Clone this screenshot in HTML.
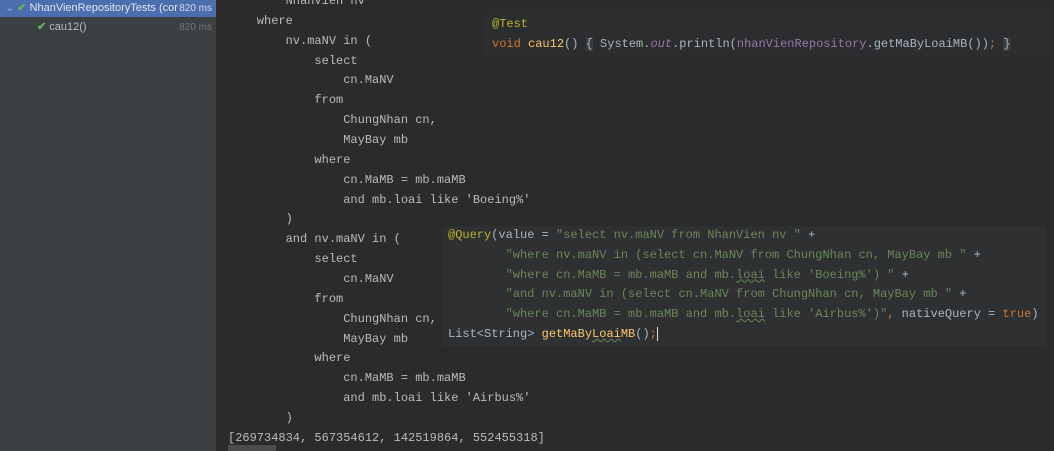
<!DOCTYPE html>
<html><head><style>
*{margin:0;padding:0;box-sizing:border-box}
body{width:1054px;height:451px;background:#2b2b2b;overflow:hidden;position:relative;font-family:"Liberation Sans",sans-serif}
#left{position:absolute;left:0;top:0;width:216px;height:451px;background:#3c3f41}
.row{position:absolute;left:0;width:216px;height:17px;font-size:11px;line-height:17px;color:#bbb}
.sel{background:#4b6eaf;color:#dfe6f0}
.ms{position:absolute;right:4px;font-size:10px;color:#777}
.sel .ms{color:#d0d8e8}
.chk{color:#5fb85f;font-weight:bold}
#con{position:absolute;left:228px;top:-8px;font-family:"Liberation Mono",monospace;font-size:12px;line-height:19.86px;color:#bbbbbb;white-space:pre}
.pop{position:absolute;font-family:"Liberation Mono",monospace;font-size:12px;white-space:pre;color:#a9b7c6}
.s{color:#6a8759}.k{color:#cc7832}.a{color:#bbb529}.m{color:#ffc66d}.i{color:#9876aa;font-style:italic}
.u{text-decoration:underline wavy #6a8759;text-decoration-thickness:1px}
</style></head><body>
<div id="left">
<div class="row sel" style="top:0"><span style="color:#9ab;margin-left:5px">⌄</span> <span class="chk">✔</span> NhanVienRepositoryTests (cor<span class="ms">820 ms</span></div>
<div class="row" style="top:19px;padding-left:37px"><span class="chk">✔</span> cau12()<span class="ms">820 ms</span></div>
</div>
<div id="con">        NhanVien nv
    where
        nv.maNV in (
            select
                cn.MaNV
            from
                ChungNhan cn,
                MayBay mb
            where
                cn.MaMB = mb.maMB
                and mb.loai like 'Boeing%'
        )
        and nv.maNV in (
            select
                cn.MaNV
            from
                ChungNhan cn,
                MayBay mb
            where
                cn.MaMB = mb.maMB
                and mb.loai like 'Airbus%'
        )
[269734834, 567354612, 142519864, 552455318]</div>
<div style="position:absolute;left:228px;top:445px;width:48px;height:6px;background:#4a4c4e"></div>
<div class="pop" style="left:484px;top:11px;width:570px;height:46px;background:#2c2d2e;padding:4px 8px;line-height:19.8px"><span class="a">@Test</span>
<span class="k">void</span> <span class="m">cau12</span>() <span style="background:#3a3b3d">{</span> System.<span class="i">out</span>.println(<span style="color:#9876aa">nhanVienRepository</span>.getMaByLoaiMB())<span class="k">;</span> <span style="background:#3a3b3d">}</span></div>
<div class="pop" style="left:443px;top:226px;width:603px;height:120px;background:#2f3032;padding:0 5px;line-height:19.8px"><span class="a">@Query</span>(value = <span class="s">"select nv.maNV from NhanVien nv "</span> +
        <span class="s">"where nv.maNV in (select cn.MaNV from ChungNhan cn, MayBay mb "</span> +
        <span class="s">"where cn.MaMB = mb.maMB and mb.<span class="u">loai</span> like 'Boeing%') "</span> +
        <span class="s">"and nv.maNV in (select cn.MaNV from ChungNhan cn, MayBay mb "</span> +
        <span class="s">"where cn.MaMB = mb.maMB and mb.<span class="u">loai</span> like 'Airbus%')"</span><span class="k">,</span> nativeQuery = <span class="k">true</span>)
List&lt;String&gt; <span class="m">getMaBy<span class="u">Loai</span>MB</span>()<span class="k">;</span><span style="border-left:1px solid #ddd"></span></div>
</body></html>
